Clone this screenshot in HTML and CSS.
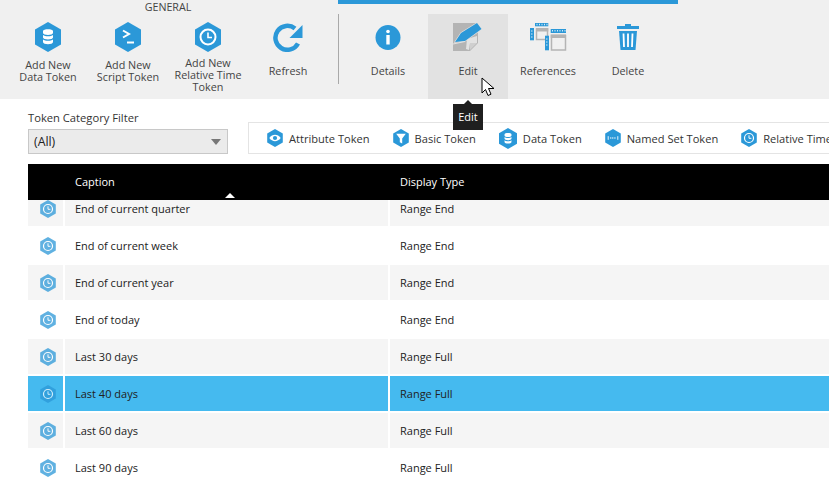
FILE: index.html
```html
<!DOCTYPE html>
<html lang="en">
<head>
  <meta charset="UTF-8">
  <meta name="viewport" content="width=device-width, initial-scale=1.0">
  <title>Tokens</title>
  <link rel="stylesheet" href="styles.css">
</head>
<body>
  <svg class="defs" width="0" height="0">
    <symbol id="clock" viewBox="0 0 26 30">
      <path d="M13 0 26 7.500v15L13 30 0 22.500v-15z" fill="currentColor"/>
      <circle cx="13" cy="15" r="7.500" fill="none" stroke="#fff" stroke-width="2"/>
      <path d="M13 10.500v5h4" fill="none" stroke="#fff" stroke-width="1.600"/>
    </symbol>
    <symbol id="db" viewBox="0 0 26 30">
      <path d="M13 0 26 7.500v15L13 30 0 22.500v-15z" fill="currentColor"/>
      <path d="M8 9c0-2.500 10-2.500 10 0v2c0 2.500-10 2.500-10 0zM8 13c2 1.800 8 1.800 10 0v2.500c0 2.500-10 2.500-10 0zM8 17.500c2 1.800 8 1.800 10 0V20c0 3-10 3-10 0z" fill="#fff"/>
    </symbol>
  </svg>

  <!-- ribbon -->
  <div class="ribbon">
    <div class="group group-general">
      <div class="group-title">GENERAL</div>
      <div class="group-buttons">
        <div class="rb">
          <svg class="hex-icon"><use href="#db"/></svg>
          <div class="rb-label"><span>Add New<br>Data Token</span></div>
        </div>
        <div class="rb">
          <svg class="hex-icon" viewBox="0 0 26 30">
            <path d="M13 0 26 7.500v15L13 30 0 22.500v-15z" fill="currentColor"/>
            <path d="M8 8.500 14 12l-6 3.500" fill="none" stroke="#fff" stroke-width="2"/>
            <path d="M12 20.500h7" stroke="#fff" stroke-width="2"/>
          </svg>
          <div class="rb-label"><span>Add New<br>Script Token</span></div>
        </div>
        <div class="rb">
          <svg class="hex-icon"><use href="#clock"/></svg>
          <div class="rb-label rb-three"><span>Add New<br>Relative Time<br>Token</span></div>
        </div>
        <div class="rb">
          <svg class="hex-icon wide" viewBox="0 0 30 30">
            <path d="M25 21.500A12 12 0 1 1 22 6.500" fill="none" stroke="currentColor" stroke-width="4.500"/>
            <path d="M29.500 3v13h-13z" fill="currentColor"/>
          </svg>
          <div class="rb-label"><span>Refresh</span></div>
        </div>
      </div>
    </div>

    <div class="group group-selected">
      <div class="selected-bar"></div>
      <div class="group-buttons">
        <div class="rb">
          <svg class="hex-icon" viewBox="0 0 26 30">
            <circle cx="13" cy="15.500" r="12.500" fill="currentColor"/>
            <circle cx="13" cy="9.500" r="1.800" fill="#fff"/>
            <rect x="11.300" y="13" width="3.400" height="9.500" fill="#fff"/>
          </svg>
          <div class="rb-label"><span>Details</span></div>
        </div>
        <div class="rb rb-hover">
          <svg class="hex-icon edit" viewBox="0 0 30 28">
            <path d="M0 0h25v20l-8 8H0z" fill="#b4b4b4"/>
            <path d="M24 13v7h-7l-1 7-3-1 1-10z" fill="#e2e2e2"/>
            <path d="M17 20h7l-7 7z" fill="#cfcfcf"/>
            <path d="M2 19 8 10 24 0l4.500 6L12 18z" fill="#2b98d8" stroke="#e2e2e2" stroke-width="1.200" paint-order="stroke"/>
            <path d="M0 21 12 18.500" stroke="#e2e2e2" stroke-width="1"/>
          </svg>
          <div class="rb-label"><span>Edit</span></div>
        </div>
        <div class="rb">
          <svg class="hex-icon refs" viewBox="0 0 37 28">
            <path d="M5 0h13.300v3.300H5z" fill="#2b98d8"/>
            <path d="M7 .8v1.500M9.500 .8v1.500M12 .8v1.500M14.500 .8v1.500M17 .8v1.500" stroke="#fff" stroke-width=".8"/>
            <path d="M0 5h4v12.300H0z" fill="#2b98d8"/>
            <path d="M1 8h1.500M1 11h1.500M1 14h1.500" stroke="#fff" stroke-width=".8"/>
            <path d="M6.500 6h11v10.500h-11z" fill="none" stroke="#b4b4b4" stroke-width="1.500"/>
            <path d="M6 5h12.300v3.500H6z" fill="#b4b4b4"/>
            <path d="M20.700 6H36v4H20.700z" fill="#2b98d8"/>
            <path d="M22.500 7v1.500M25 7v1.500M27.500 7v1.500M30 7v1.500M32.500 7v1.500M35 7v1.500" stroke="#fff" stroke-width=".8"/>
            <path d="M15 12.700h4v14.600h-4z" fill="#2b98d8"/>
            <path d="M16 16h1.500M16 19h1.500M16 22h1.500" stroke="#fff" stroke-width=".8"/>
            <path d="M21.500 12.500H35.500v14.500H21.500z" fill="none" stroke="#b4b4b4" stroke-width="1.500"/>
            <path d="M20.700 11.500H36v3.500H20.700z" fill="#b4b4b4"/>
          </svg>
          <div class="rb-label"><span>References</span></div>
        </div>
        <div class="rb">
          <svg class="hex-icon trash" viewBox="0 0 22 26">
            <path d="M8 0h6v2h8v3H0V2h8z" fill="currentColor"/>
            <path d="M2 7h18l-1.500 19h-15z" fill="currentColor"/>
            <path d="M6.500 9.500 7 23M11 9.500V23M15.500 9.500 15 23" stroke="#fff" stroke-width="1.800"/>
          </svg>
          <div class="rb-label"><span>Delete</span></div>
        </div>
      </div>
    </div>
  </div>

  <!-- filter row -->
  <div class="filter-row">
    <div class="filter">
      <div class="filter-label">Token Category Filter</div>
      <div class="select"><span>(All)</span><i class="caret"></i></div>
    </div>
    <div class="chips">
      <div class="chip">
        <svg class="chip-icon" viewBox="0 0 26 30">
          <path d="M13 0 26 7.500v15L13 30 0 22.500v-15z" fill="currentColor"/>
          <path d="M3.500 15c5-7 14-7 19 0-5 7-14 7-19 0z" fill="#fff"/>
          <circle cx="13" cy="15" r="3.500" fill="currentColor"/>
        </svg>
        <span>Attribute Token</span>
      </div>
      <div class="chip">
        <svg class="chip-icon" viewBox="0 0 26 30">
          <path d="M13 0 26 7.500v15L13 30 0 22.500v-15z" fill="currentColor"/>
          <path d="M5 8h16l-6 8v8l-4-2v-6z" fill="#fff"/>
        </svg>
        <span>Basic Token</span>
      </div>
      <div class="chip">
        <svg class="chip-icon chip-icon-db"><use href="#db"/></svg>
        <span>Data Token</span>
      </div>
      <div class="chip">
        <svg class="chip-icon" viewBox="0 0 26 30">
          <path d="M13 0 26 7.500v15L13 30 0 22.500v-15z" fill="currentColor"/>
          <path d="M5 12v6M21 12v6" stroke="#fff" stroke-width="1.500"/>
          <path d="M8 15h10" stroke="#fff" stroke-width="2" stroke-dasharray="2 1"/>
        </svg>
        <span>Named Set Token</span>
      </div>
      <div class="chip">
        <svg class="chip-icon"><use href="#clock"/></svg>
        <span>Relative Time Token</span>
      </div>
    </div>
  </div>

  <!-- token grid -->
  <div class="grid">
    <div class="grid-head">
      <div class="cell-icon"></div>
      <div class="cell-caption">Caption<i class="sort"></i></div>
      <div class="cell-type">Display Type</div>
    </div>
    <div class="grid-view">
      <div class="rows">
        <div class="row"><div class="cell-icon"><svg class="row-icon"><use href="#clock"/></svg></div><div class="cell-caption">End of current quarter</div><div class="cell-type">Range End</div></div>
        <div class="row"><div class="cell-icon"><svg class="row-icon"><use href="#clock"/></svg></div><div class="cell-caption">End of current week</div><div class="cell-type">Range End</div></div>
        <div class="row"><div class="cell-icon"><svg class="row-icon"><use href="#clock"/></svg></div><div class="cell-caption">End of current year</div><div class="cell-type">Range End</div></div>
        <div class="row"><div class="cell-icon"><svg class="row-icon"><use href="#clock"/></svg></div><div class="cell-caption">End of today</div><div class="cell-type">Range End</div></div>
        <div class="row"><div class="cell-icon"><svg class="row-icon"><use href="#clock"/></svg></div><div class="cell-caption">Last 30 days</div><div class="cell-type">Range Full</div></div>
        <div class="row selected"><div class="cell-icon"><svg class="row-icon"><use href="#clock"/></svg></div><div class="cell-caption">Last 40 days</div><div class="cell-type">Range Full</div></div>
        <div class="row"><div class="cell-icon"><svg class="row-icon"><use href="#clock"/></svg></div><div class="cell-caption">Last 60 days</div><div class="cell-type">Range Full</div></div>
        <div class="row"><div class="cell-icon"><svg class="row-icon"><use href="#clock"/></svg></div><div class="cell-caption">Last 90 days</div><div class="cell-type">Range Full</div></div>
      </div>
    </div>
  </div>

  <!-- tooltip and pointer sit over the page -->
  <div class="tooltip">Edit</div>
  <svg class="pointer" width="14" height="21" viewBox="0 0 14 21">
    <path d="M1 1v15l3.500-3.500 2.500 6 3-1.300-2.500-5.700H13z" fill="#fff" stroke="#000" stroke-width="1"/>
  </svg>
</body>
</html>
```

FILE: styles.css
```css
html, body {
  margin: 0;
  height: 100%;
  overflow: hidden;
}
body {
  font-family: "Open Sans", "Noto Sans", sans-serif;
  font-size: 11px;
  color: #222;
  background-color: white;
  position: relative;
}
.defs {
  position: absolute;
}
.ribbon {
  height: 99px;
  background-color: #f0f0f0;
  display: flex;
  color: #2b98d8;
}
.group {
  display: flex;
  flex-direction: column;
}
.group-general {
  width: 338px;
  padding-left: 8px;
  box-sizing: border-box;
}
.group-title {
  height: 14px;
  line-height: 14px;
  width: 320px;
  text-align: center;
  color: #444;
  font-size: 10.700px;
}
.group-buttons {
  display: flex;
  height: 85px;
}
.group-selected {
  width: 340px;
}
.selected-bar {
  height: 4px;
  margin-bottom: 10px;
  background-color: #2b98d8;
}
.group-selected .group-buttons {
  padding-left: 10px;
  position: relative;
}
.group-selected .group-buttons::before {
  content: "";
  position: absolute;
  left: 0;
  top: 0;
  width: 1px;
  height: 70px;
  background-color: #a9a9a9;
}
.rb {
  width: 80px;
  display: flex;
  flex-direction: column;
  align-items: center;
}
.rb-hover {
  background-color: #e2e2e2;
}
.hex-icon {
  width: 26px;
  height: 30px;
  margin-top: 8px;
  flex: none;
}
.wide {
  width: 30px;
}
.edit {
  width: 30px;
  height: 28px;
  margin-top: 9px;
  margin-bottom: 1px;
}
.refs {
  width: 37px;
  height: 28px;
  margin-top: 9px;
  margin-bottom: 1px;
}
.trash {
  width: 22px;
  height: 26px;
  margin-top: 10px;
  margin-bottom: 2px;
}
.rb-label {
  margin-top: 7px;
  height: 24px;
  line-height: 12px;
  text-align: center;
  color: #444;
  font-size: 10.800px;
  display: flex;
  align-items: center;
}
.rb-three {
  height: 36px;
  margin-top: 5px;
}
.filter-row {
  display: flex;
  align-items: flex-end;
  height: 55px;
  padding-left: 28px;
  gap: 20px;
}
.filter {
  width: 200px;
}
.filter-label {
  line-height: 16px;
  margin-bottom: 3px;
  color: #333;
  font-size: 11.200px;
}
.select {
  height: 24px;
  background-color: #ebebeb;
  border: 1px solid #c8c8c8;
  display: flex;
  align-items: center;
  justify-content: space-between;
  padding: 0 5px;
  font-size: 12.300px;
  box-sizing: border-box;
  height: 25px;
}
.caret {
  border-left: 5px solid transparent;
  border-right: 5px solid transparent;
  border-top: 6px solid #777;
  margin-right: 1px;
}
.chips {
  flex: 1;
  height: 30px;
  border: 1px solid #e4e4e4;
  border-right: none;
  display: flex;
  align-items: center;
  overflow: hidden;
  padding-left: 18px;
  gap: 23px;
  white-space: nowrap;
  font-size: 11.100px;
}
.chip {
  display: flex;
  align-items: center;
  gap: 6px;
  color: #333;
}
.chip-icon {
  width: 16px;
  height: 18px;
  color: #2b98d8;
  flex: none;
}
.chip-icon-db {
  width: 18px;
  height: 21px;
}
.grid {
  margin: 10px 0 0 28px;
}
.grid-head {
  height: 36px;
  background-color: black;
  color: white;
  display: flex;
  position: relative;
}
.grid-view {
  height: 278px;
  overflow: hidden;
}
.rows {
  margin-top: -9px;
}
.row {
  display: flex;
  height: 37px;
  box-sizing: border-box;
  border-bottom: 2px solid white;
  background-color: white;
}
.row:nth-child(odd) {
  background-color: #f5f5f5;
}
.row.selected {
  background-color: #45baef;
}
.cell-icon {
  width: 35px;
  flex: none;
  display: flex;
  align-items: center;
  padding-left: 12px;
  box-sizing: border-box;
}
.cell-caption {
  width: 327px;
  flex: none;
  box-sizing: border-box;
  padding: 0 0 2px 10px;
  border-left: 2px solid transparent;
  border-right: 2px solid transparent;
  display: flex;
  align-items: center;
}
.cell-type {
  flex: 1;
  padding: 0 0 2px 10px;
  display: flex;
  align-items: center;
}
.row .cell-caption {
  border-color: white;
  padding-bottom: 0;
}
.row .cell-type {
  padding-bottom: 0;
}
.row-icon {
  width: 16px;
  height: 18px;
  color: #2b98d8;
  opacity: .75;
}
.sort {
  position: absolute;
  left: 197px;
  bottom: 2px;
  border-left: 5px solid transparent;
  border-right: 5px solid transparent;
  border-bottom: 5px solid white;
}
.tooltip {
  position: absolute;
  left: 453px;
  top: 104px;
  width: 30px;
  height: 26px;
  line-height: 26px;
  text-align: center;
  background-color: #1f1f1f;
  color: white;
}
.tooltip::before {
  content: "";
  position: absolute;
  left: 11px;
  top: -4px;
  border-left: 4px solid transparent;
  border-right: 4px solid transparent;
  border-bottom: 4px solid #1f1f1f;
}
.pointer {
  position: absolute;
  left: 481px;
  top: 77px;
}
```
